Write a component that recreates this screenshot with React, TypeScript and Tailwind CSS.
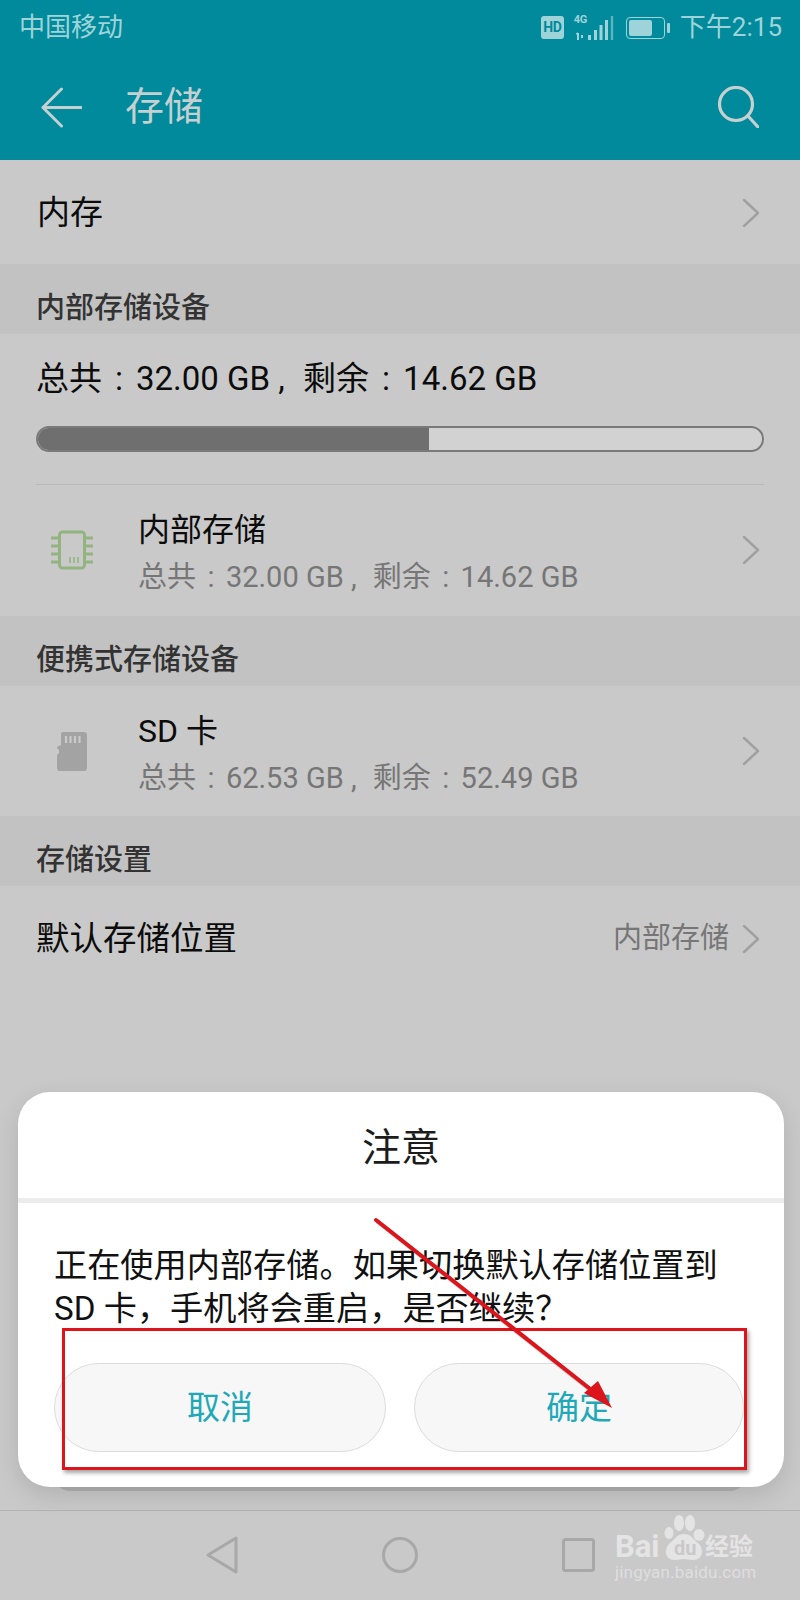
const CJK = "font-['Roboto','Noto_Sans_CJK_SC',sans-serif]";

function Chevron() {
  return (
    <svg width="18" height="30" viewBox="0 0 18 30" fill="none" stroke="#a0a0a0" strokeWidth="2.4" strokeLinecap="round" strokeLinejoin="round">
      <path d="M2 2l14 13L2 28" />
    </svg>
  );
}

function SectionHeader({ children }: { children: React.ReactNode }) {
  return (
    <div className="flex h-[70px] items-center bg-[#c2c2c2] pl-[36px] pt-[20px] text-[29px] font-medium text-[#333333]">
      {children}
    </div>
  );
}

// "总共：32.00 GB ，剩余：14.62 GB": the phone centres the colon and sets a latin comma
function Usage({ total, free }: { total: string; free: string }) {
  return (
    <>
      总共<span className="inline-block w-[1.03em] text-center">:</span>
      {total} GB<span className="inline-block w-[1em] pl-[0.25em]">,</span>
      剩余<span className="inline-block w-[1.03em] text-center">:</span>
      {free} GB
    </>
  );
}

function StorageRow({ icon, title, total, free, textLeft, height }: { icon: React.ReactNode; title: string; total: string; free: string; textLeft: string; height: string }) {
  return (
    <div className={"flex items-center " + height}>
      <div className="flex w-[139px] shrink-0 justify-center pl-[4px]">{icon}</div>
      <div className={"flex-1 pt-[3px] " + textLeft}>
        <div className="text-[32px] leading-[44px] text-[#0c0c0c]">{title}</div>
        <div className="mt-[7px] text-[29px] leading-[36px] text-[#767676]">
          <Usage total={total} free={free} />
        </div>
      </div>
      <div className="pr-[40px]">
        <Chevron />
      </div>
    </div>
  );
}

function ChipIcon() {
  return (
    <svg width="44" height="40" viewBox="0 0 44 40" fill="none" stroke="#93b480" strokeWidth="3">
      <rect x="9.5" y="2" width="25" height="36" rx="3" />
      <path d="M1 8h8M1 16h8M1 24h8M1 32h8M35 8h8M35 16h8M35 24h8M35 32h8" />
      <path d="M20 27v6M24 27v6M28 27v6" strokeWidth="1.6" />
    </svg>
  );
}

function SdIcon() {
  return (
    <svg width="30" height="40" viewBox="0 0 30 40">
      <path
        d="M6 1h21a3 3 0 0 1 3 3v33a3 3 0 0 1-3 3H3a3 3 0 0 1-3-3V24l2-2v-3l-2-2v-1l4-2V3a2 2 0 0 1 2-2z"
        fill="#a3a3a3"
      />
      <path d="M9 5v7M13.5 5v7M18 5v7M22.5 5v7" stroke="#c9c9c9" strokeWidth="2.2" />
    </svg>
  );
}

function StatusIcons() {
  return (
    <div className="flex items-center">
      <div className="flex h-[23px] w-[23px] items-center justify-center rounded-[3px] bg-[#9fd3da] text-[14px] font-bold tracking-[-0.5px] text-[#008a9b]">
        HD
      </div>
      <div className="relative ml-[10px] h-[26px] w-[40px]">
        <span className="absolute left-0 top-[-1px] text-[11px] font-bold leading-[12px] tracking-[-0.3px] text-[#9fd3da]">4G</span>
        <svg className="absolute inset-0" width="40" height="26" viewBox="0 0 40 26" fill="none" stroke="#9fd3da">
          <path d="M4 18v7M2.5 19.5L4 18M8 20v3" strokeWidth="2" />
          <path d="M15.5 20v5M21.5 15v10M27 10v15M32.5 5v20" strokeWidth="3" />
          <path d="M38 1v24" stroke="#5fb3bd" strokeWidth="2.4" />
        </svg>
      </div>
      <div className="ml-[12px] flex items-center">
        <div className="flex h-[22px] w-[39px] items-center rounded-[4px] border border-[#9fd3da] p-[2px]">
          <div className="h-full w-[23px] rounded-[2px] bg-[#9fd3da]" />
        </div>
        <div className="ml-[2px] h-[10px] w-[3px] rounded-[1px] bg-[#9fd3da]" />
      </div>
    </div>
  );
}

function BaiduMark() {
  return (
    <div className="absolute left-[614px] top-[1514px] h-[72px] w-[145px] text-[#e4e4e4]">
      <span className="absolute left-[1px] top-[17px] text-[31px] font-bold leading-[32px]">Bai</span>
      <svg className="absolute left-[50px] top-0" width="42" height="48" viewBox="0 0 42 48" fill="#e4e4e4">
        <ellipse cx="5" cy="19" rx="4.5" ry="6" />
        <ellipse cx="15" cy="9" rx="5" ry="8" />
        <ellipse cx="26" cy="9" rx="5" ry="8" />
        <ellipse cx="35" cy="21" rx="5.5" ry="6" />
        <path d="M20 20c7 0 9 5 14 9 6 5 6 17-5 17-4 0-6-1-9-1s-5 1-9 1C0 46 0 34 6 29c5-4 7-9 14-9z" />
      </svg>
      <span className="absolute left-[60px] top-[21px] text-[20px] font-bold leading-[26px] text-[#c9c9c9]">du</span>
      <span className="absolute left-[91px] top-[20px] text-[24px] font-bold leading-[26px]">经验</span>
      <span className="absolute left-[1px] top-[47px] whitespace-nowrap text-[17px] leading-[22px] tracking-[0.2px] text-[#dedede]">
        jingyan.baidu.com
      </span>
    </div>
  );
}

export default function App() {
  return (
    <div className={"relative flex h-[1600px] w-[800px] flex-col overflow-hidden bg-[#c9c9c9] " + CJK}>
      {/* status bar + toolbar */}
      <div className="h-[160px] shrink-0 bg-[#008a9b]">
        <div className="flex h-[55px] items-center justify-between pl-[19px] pr-[18px] text-[26px] text-[#9fd3da]">
          <span>中国移动</span>
          <div className="flex items-center">
            <StatusIcons />
            <span className="ml-[10px]">下午2:15</span>
          </div>
        </div>
        <div className="flex h-[105px] items-center pb-[1px] pl-[41px] pr-[41px]">
          <svg width="41" height="41" viewBox="0 0 42 42" fill="none" stroke="#c7d0d1" strokeWidth="3" strokeLinecap="round" strokeLinejoin="round">
            <path d="M21 2L2 21l19 19M2 21h39" />
          </svg>
          <span className="ml-[43px] flex-1 text-[39px] text-[#c7d0d1]">存储</span>
          <svg width="42" height="42" viewBox="0 0 42 42" fill="none" stroke="#c7d0d1" strokeWidth="3.2" strokeLinecap="round">
            <circle cx="19" cy="18" r="16.5" />
            <path d="M31 30l10 11" />
          </svg>
        </div>
      </div>

      <div className="flex-1">
        <div className="flex h-[104px] items-center justify-between pl-[37px] pr-[40px] pt-[1px] text-[33px] text-[#0c0c0c]">
          <span>内存</span>
          <Chevron />
        </div>

        <SectionHeader>内部存储设备</SectionHeader>
        <div className="h-[150px] px-[36px]">
          <div className="pt-[23px] text-[33px] leading-[44px] text-[#0c0c0c]">
            <Usage total="32.00" free="14.62" />
          </div>
          <div className="mt-[25px] flex h-[26px] overflow-hidden rounded-full border-2 border-[#7a7a7a] bg-[#d2d2d2]">
            <div className="h-full w-[54%] bg-[#6f6f6f]" />
          </div>
          <div className="mt-[32px] h-px bg-[#b9b9b9]" />
        </div>
        <StorageRow icon={<ChipIcon />} title="内部存储" total="32.00" free="14.62" textLeft="-ml-[1px]" height="h-[132px]" />

        <SectionHeader>便携式存储设备</SectionHeader>
        <StorageRow icon={<SdIcon />} title="SD 卡" total="62.53" free="52.49" textLeft="-ml-[1px]" height="h-[130px]" />

        <SectionHeader>存储设置</SectionHeader>
        <div className="flex h-[100px] items-center pl-[36px] pr-[40px] pt-[6px]">
          <span className="flex-1 text-[33.5px] text-[#0c0c0c]">默认存储位置</span>
          <span className="mr-[13px] text-[29px] text-[#767676]">内部存储</span>
          <Chevron />
        </div>
      </div>

      {/* navigation bar */}
      <div className="flex h-[90px] shrink-0 items-center border-t border-[#b4b4b4] pb-[2px]">
        <div className="flex w-full items-center pl-[206px]">
          <svg width="33" height="38" viewBox="0 0 33 38" fill="none" stroke="#a8a8a8" strokeWidth="3" strokeLinejoin="round">
            <path d="M30 2v34L2 19z" />
          </svg>
          <svg className="ml-[143px]" width="36" height="36" viewBox="0 0 36 36" fill="none" stroke="#a8a8a8" strokeWidth="3">
            <circle cx="18" cy="18" r="16.5" />
          </svg>
          <svg className="ml-[144px]" width="33" height="34" viewBox="0 0 33 34" fill="none" stroke="#a8a8a8" strokeWidth="3" strokeLinejoin="round">
            <rect x="1.5" y="1.5" width="30" height="31" rx="2" />
          </svg>
        </div>
      </div>

      {/* the sheet peeking out under the dialog */}
      <div className="absolute left-[50px] top-[1470px] h-[21px] w-[700px] rounded-b-[24px] bg-[#b0b0b0]" />

      {/* dialog */}
      <div className="absolute left-[18px] top-[1092px] h-[395px] w-[766px] overflow-hidden rounded-[32px] bg-white shadow-[0_8px_24px_rgba(0,0,0,0.12)]">
        <div className="flex h-[106px] items-center justify-center pt-[6px] text-[39px] text-[#1c1c1c]">注意</div>
        <div className="h-[5px] bg-[#ececec]" />
        <div className="px-[36px] pt-[41px] text-[33.2px] leading-[43px] text-[#111111]">
          正在使用内部存储。如果切换默认存储位置到 SD 卡，手机将会重启，是否继续？
        </div>
        <div className="mt-[33px] flex justify-between pl-[36px] pr-[40px]">
          <button className="flex h-[89px] w-[332px] items-center justify-center rounded-full border border-[#dcdcdc] bg-[#f7f7f7] text-[33px] text-[#1fa9b8]">
            取消
          </button>
          <button className="flex h-[89px] w-[330px] items-center justify-center rounded-full border border-[#dcdcdc] bg-[#f7f7f7] text-[33px] text-[#1fa9b8]">
            确定
          </button>
        </div>
      </div>

      {/* screenshot annotation: red box + arrow */}
      <div className="absolute left-[62px] top-[1328px] h-[142px] w-[685px] border-[3px] border-[#dc141b] shadow-[2px_3px_4px_rgba(0,0,0,0.35)]" />
      <svg className="absolute left-0 top-0" width="800" height="1600" viewBox="0 0 800 1600" fill="none">
        <path d="M378 1222L598 1396" stroke="#000000" strokeOpacity="0.18" strokeWidth="4.5" strokeLinecap="round" />
        <path d="M376 1220L594 1392" stroke="#dc141b" strokeWidth="4" strokeLinecap="round" />
        <path d="M612 1408L584 1393L598 1381z" fill="#dc141b" />
      </svg>

      <BaiduMark />
    </div>
  );
}
